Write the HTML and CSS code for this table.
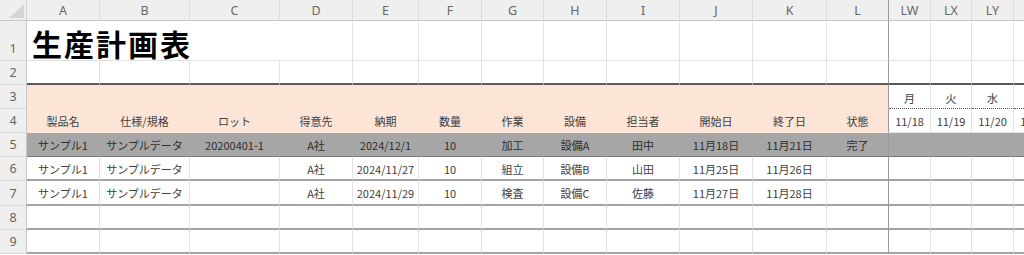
FILE: index.html
```html
<!DOCTYPE html>
<html lang="ja">
<head>
<meta charset="utf-8">
<title>生産計画表</title>
<link rel="stylesheet" href="styles.css">
</head>
<body>
<div class="sheet">
  <div class="row hdr">
    <div class="corner"><svg width="26" height="20" viewBox="0 0 26 20"><polygon points="9,18 24,18 24,4" fill="#d6d6d6"/></svg></div>
    <div class="ch">A</div><div class="ch">B</div><div class="ch">C</div><div class="ch">D</div><div class="ch">E</div><div class="ch">F</div><div class="ch">G</div><div class="ch">H</div><div class="ch">I</div><div class="ch">J</div><div class="ch">K</div><div class="ch fz">L</div><div class="ch">LW</div><div class="ch">LX</div><div class="ch">LY</div><div class="ch"></div>
  </div>
  <div class="row r1">
    <div class="rh rh-low">1</div>
    <div class="c title">生産計画表</div>
    <div class="c"></div><div class="c"></div><div class="c"></div><div class="c"></div><div class="c"></div><div class="c"></div><div class="c"></div><div class="c"></div><div class="c fz"></div><div class="c"></div><div class="c"></div><div class="c"></div><div class="c"></div>
  </div>
  <div class="row r2">
    <div class="rh">2</div>
    <div class="c"></div><div class="c"></div><div class="c"></div><div class="c"></div><div class="c"></div><div class="c"></div><div class="c"></div><div class="c"></div><div class="c"></div><div class="c"></div><div class="c"></div><div class="c fz"></div><div class="c"></div><div class="c"></div><div class="c"></div><div class="c"></div>
  </div>
  <div class="row r3">
    <div class="rh">3</div>
    <div class="c p"></div><div class="c p"></div><div class="c p"></div><div class="c p"></div><div class="c p"></div><div class="c p"></div><div class="c p"></div><div class="c p"></div><div class="c p"></div><div class="c p"></div><div class="c p"></div><div class="c p fz"></div>
    <div class="c cal">月</div><div class="c cal">火</div><div class="c cal">水</div><div class="c cal"></div>
  </div>
  <div class="row r4">
    <div class="rh">4</div>
    <div class="c p">製品名</div><div class="c p">仕様/規格</div><div class="c p">ロット</div><div class="c p">得意先</div><div class="c p">納期</div><div class="c p">数量</div><div class="c p">作業</div><div class="c p">設備</div><div class="c p">担当者</div><div class="c p">開始日</div><div class="c p">終了日</div><div class="c p fz">状態</div>
    <div class="c">11/18</div><div class="c">11/19</div><div class="c">11/20</div><div class="c">11/21</div>
  </div>
  <div class="row r5">
    <div class="rh">5</div>
    <div class="c">サンプル1</div><div class="c">サンプルデータ</div><div class="c">20200401-1</div><div class="c">A社</div><div class="c">2024/12/1</div><div class="c">10</div><div class="c">加工</div><div class="c">設備A</div><div class="c">田中</div><div class="c">11月18日</div><div class="c">11月21日</div><div class="c fz">完了</div>
    <div class="c"></div><div class="c"></div><div class="c"></div><div class="c"></div>
  </div>
  <div class="row rd">
    <div class="rh">6</div>
    <div class="c">サンプル1</div><div class="c">サンプルデータ</div><div class="c"></div><div class="c">A社</div><div class="c">2024/11/27</div><div class="c">10</div><div class="c">組立</div><div class="c">設備B</div><div class="c">山田</div><div class="c">11月25日</div><div class="c">11月26日</div><div class="c fz"></div>
    <div class="c"></div><div class="c"></div><div class="c"></div><div class="c"></div>
  </div>
  <div class="row rd">
    <div class="rh">7</div>
    <div class="c">サンプル1</div><div class="c">サンプルデータ</div><div class="c"></div><div class="c">A社</div><div class="c">2024/11/29</div><div class="c">10</div><div class="c">検査</div><div class="c">設備C</div><div class="c">佐藤</div><div class="c">11月27日</div><div class="c">11月28日</div><div class="c fz"></div>
    <div class="c"></div><div class="c"></div><div class="c"></div><div class="c"></div>
  </div>
  <div class="row rd">
    <div class="rh">8</div>
    <div class="c"></div><div class="c"></div><div class="c"></div><div class="c"></div><div class="c"></div><div class="c"></div><div class="c"></div><div class="c"></div><div class="c"></div><div class="c"></div><div class="c"></div><div class="c fz"></div>
    <div class="c"></div><div class="c"></div><div class="c"></div><div class="c"></div>
  </div>
  <div class="row rd">
    <div class="rh">9</div>
    <div class="c"></div><div class="c"></div><div class="c"></div><div class="c"></div><div class="c"></div><div class="c"></div><div class="c"></div><div class="c"></div><div class="c"></div><div class="c"></div><div class="c"></div><div class="c fz"></div>
    <div class="c"></div><div class="c"></div><div class="c"></div><div class="c"></div>
  </div>
</div>
</body>
</html>
```

FILE: styles.css
```css
* {
  box-sizing: border-box;
  margin: 0;
  padding: 0;
}

html, body {
  width: 1024px;
  height: 255px;
  overflow: hidden;
  background: #ffffff;
}

body {
  font-family: "Noto Sans CJK JP", "Noto Sans", sans-serif;
}

.sheet {
  display: grid;
  grid-template-columns: 27px 73px 90px 90px 73px 66px 63px 62px 63px 73px 73px 74px 62px 42px 41px 42px 42px;
  grid-template-rows: 21px 40px 24px 24px 24px 24px 24px 25px 24px 24px;
  width: 1056px;
}

.row {
  display: contents;
}

.corner {
  background: #efefef;
  border-right: 1px solid #d2d2d2;
  border-bottom: 1px solid #c6c6c6;
}

.corner svg {
  display: block;
}

.ch {
  background: #efefef;
  border-right: 1px solid #dcdcdc;
  border-bottom: 1px solid #c6c6c6;
  color: #666666;
  font-family: "Noto Sans", "Liberation Sans", sans-serif;
  font-size: 12.5px;
  display: flex;
  align-items: center;
  justify-content: center;
  padding-top: 1px;
}

.rh {
  background: #efefef;
  border-right: 1px solid #c6c6c6;
  border-bottom: 1px solid #dadada;
  color: #666666;
  font-family: "Noto Sans", "Liberation Sans", sans-serif;
  font-size: 12.5px;
  display: flex;
  align-items: center;
  justify-content: center;
}

.rh-low {
  align-items: flex-end;
  padding-bottom: 3px;
}

.c {
  border-right: 1px solid #e2e2e2;
  border-bottom: 1px solid #e2e2e2;
  display: flex;
  align-items: center;
  justify-content: center;
  font-size: 11px;
  color: #404040;
  white-space: nowrap;
  overflow: hidden;
  padding-top: 1px;
}

.title {
  grid-column: span 3;
  border-right: none;
  justify-content: flex-start;
  align-items: flex-end;
  padding: 0 0 2px 5px;
  font-size: 30px;
  line-height: 30px;
  font-weight: 700;
  letter-spacing: 2px;
  color: #000000;
  overflow: visible;
}

.r2 .c {
  border-bottom: 2px solid #595959;
}

.r3 .p {
  background: #fce4d6;
  border-right-color: #fce4d6;
  border-bottom-color: #fce4d6;
}

.r3 .cal {
  border-bottom: 1px dotted #555555;
  padding-top: 2px;
}

.r4 .p {
  background: #fce4d6;
  border-right-color: #fce4d6;
  border-bottom-color: #fce4d6;
}

.r5 .c {
  background: #a6a6a6;
  border-right-color: #a6a6a6;
  border-bottom: 1px solid #7a7a7a;
  color: #2e2e2e;
}

.rd .c {
  border-bottom: 2px solid #a3a3a3;
}

.sheet .fz {
  border-right: 1px solid #9c9c9c;
}
```
